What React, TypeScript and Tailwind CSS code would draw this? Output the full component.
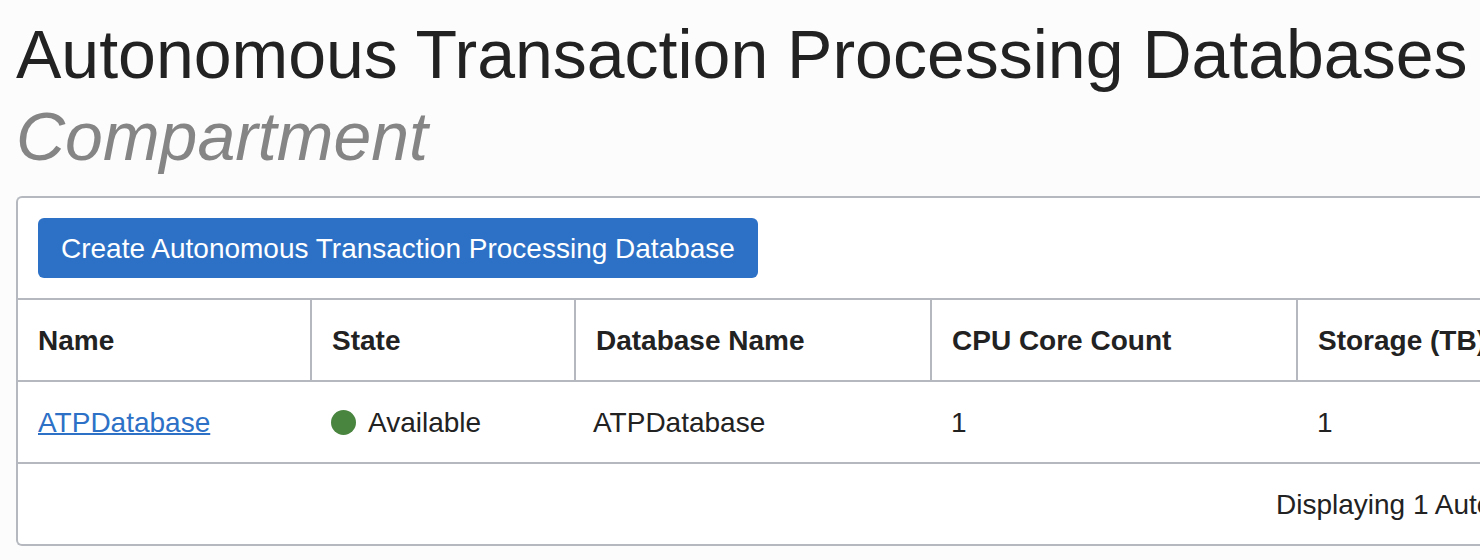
import React from "react";

const databases = [
  { name: "ATPDatabase", state: "Available", dbName: "ATPDatabase", cores: 1, storage: 1 },
];

export default function App() {
  return (
    <main className="min-h-screen overflow-hidden bg-[#fcfcfc] pt-[13px] pb-3 pl-4 font-['Liberation_Sans',Arial,sans-serif] text-[28px] leading-8 text-[#222]">
      <h1 className="text-[68px] leading-[82px] whitespace-nowrap">
        Autonomous Transaction Processing Databases
        <span className="block text-[#858585] italic">Compartment</span>
      </h1>
      <section className="mt-[19px] rounded-l-md border-2 border-r-0 border-[#b5b9bf] bg-white">
        <div className="p-5">
          <button
            type="button"
            className="h-[60px] rounded-md bg-[#2d71c7] px-[23px] pt-0.5 whitespace-nowrap text-white"
          >
            Create Autonomous Transaction Processing Database
          </button>
        </div>
        <table className="w-full table-fixed border-collapse text-left">
          <colgroup>
            <col className="w-[293px]" />
            <col className="w-[264px]" />
            <col className="w-[356px]" />
            <col className="w-[366px]" />
            <col />
          </colgroup>
          <thead>
            <tr className="h-[82px] border-y-2 border-[#b5b9bf] whitespace-nowrap">
              <th className="border-r-2 border-[#b5b9bf] px-5 pt-0.5">Name</th>
              <th className="border-r-2 border-[#b5b9bf] px-5 pt-0.5">State</th>
              <th className="border-r-2 border-[#b5b9bf] px-5 pt-0.5">Database Name</th>
              <th className="border-r-2 border-[#b5b9bf] px-5 pt-0.5">CPU Core Count</th>
              <th className="pt-0.5 pl-5">Storage (TB)</th>
            </tr>
          </thead>
          <tbody>
            {databases.map((db) => (
              <tr key={db.name} className="h-[82px] border-b-2 border-[#b5b9bf]">
                <td className="px-5 pt-0.5">
                  <a href="#database" className="text-[#2d71c7] underline decoration-2">{db.name}</a>
                </td>
                <td className="px-5">
                  <span className="flex items-center gap-3">
                    <span className="size-[25px] rounded-full bg-[#4a8540]" />
                    <span className="pt-0.5">{db.state}</span>
                  </span>
                </td>
                <td className="px-[18px] pt-0.5">{db.dbName}</td>
                <td className="px-5 pt-0.5">{db.cores}</td>
                <td className="pt-0.5 pl-5">{db.storage}</td>
              </tr>
            ))}
          </tbody>
        </table>
        <div className="flex h-20 items-center overflow-hidden pt-0.5 pl-[1258px] whitespace-nowrap">
          Displaying 1 Autonomous Transaction Processing Databases
        </div>
      </section>
    </main>
  );
}
